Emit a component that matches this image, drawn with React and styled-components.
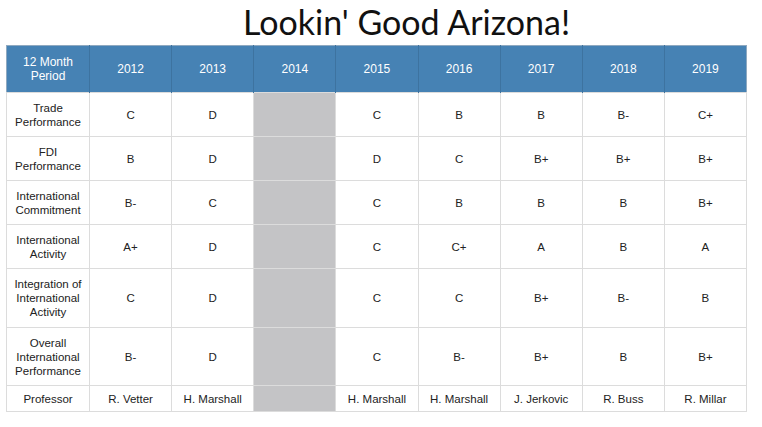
import styled, { createGlobalStyle } from 'styled-components';

const GlobalStyle = createGlobalStyle`
  body {
    margin: 0;
    background: #ffffff;
    font-family: "Liberation Sans", Arial, sans-serif;
  }
`;

const Page = styled.div`
  width: 762px;
  padding: 0 15px 0 6px;
  box-sizing: border-box;
`;

const Title = styled.h1`
  margin: 0;
  height: 45px;
  padding: 0 0 2px 60px;
  box-sizing: border-box;
  display: flex;
  align-items: center;
  justify-content: center;
  font-family: Lato, "Liberation Sans", sans-serif;
  font-weight: 400;
  font-size: 34px;
  color: #111111;
  line-height: 1;
`;

const Table = styled.table`
  width: 741px;
  border-collapse: collapse;
  table-layout: fixed;
  border: 1px solid #8fa9c0;
  font-family: "Liberation Sans", Arial, sans-serif;
  font-size: 11.5px;
  color: #222222;
`;

const HeadCell = styled.th`
  background: #4682b4;
  color: #ffffff;
  font-weight: 400;
  font-size: 12px;
  height: 46px;
  padding: 0 4px;
  line-height: 14px;
  border-left: 1px solid #3d73a0;
  text-align: center;
  &:first-child {
    border-left: none;
  }
`;

const Cell = styled.td`
  text-align: center;
  vertical-align: middle;
  padding: 0 4px;
  line-height: 14px;
  height: ${(p) => p.$h}px;
  border: 1px solid #dcdcdc;
  background: ${(p) => (p.$blank ? '#c4c4c6' : '#ffffff')};
`;

const years = ['2012', '2013', '2014', '2015', '2016', '2017', '2018', '2019'];

const rows = [
  { label: ['Trade', 'Performance'], h: 43, vals: ['C', 'D', '', 'C', 'B', 'B', 'B-', 'C+'] },
  { label: ['FDI', 'Performance'], h: 43, vals: ['B', 'D', '', 'D', 'C', 'B+', 'B+', 'B+'] },
  { label: ['International', 'Commitment'], h: 43, vals: ['B-', 'C', '', 'C', 'B', 'B', 'B', 'B+'] },
  { label: ['International', 'Activity'], h: 43, vals: ['A+', 'D', '', 'C', 'C+', 'A', 'B', 'A'] },
  {
    label: ['Integration of', 'International', 'Activity'],
    h: 58,
    vals: ['C', 'D', '', 'C', 'C', 'B+', 'B-', 'B'],
  },
  {
    label: ['Overall', 'International', 'Performance'],
    h: 57,
    vals: ['B-', 'D', '', 'C', 'B-', 'B+', 'B', 'B+'],
  },
  {
    label: ['Professor'],
    h: 25,
    vals: ['R. Vetter', 'H. Marshall', '', 'H. Marshall', 'H. Marshall', 'J. Jerkovic', 'R. Buss', 'R. Millar'],
  },
];

function App() {
  return (
    <Page>
      <GlobalStyle />
      <Title>Lookin' Good Arizona!</Title>
      <Table>
        <colgroup>
          <col style={{ width: 83 }} />
          {years.map((y) => (
            <col key={y} />
          ))}
        </colgroup>
        <thead>
          <tr>
            <HeadCell>
              12 Month
              <br />
              Period
            </HeadCell>
            {years.map((y) => (
              <HeadCell key={y}>{y}</HeadCell>
            ))}
          </tr>
        </thead>
        <tbody>
          {rows.map((r) => (
            <tr key={r.label.join(' ')}>
              <Cell $h={r.h}>
                {r.label.map((l, i) => (
                  <span key={l}>
                    {i > 0 && <br />}
                    {l}
                  </span>
                ))}
              </Cell>
              {r.vals.map((v, i) => (
                <Cell key={i} $h={r.h} $blank={i === 2}>
                  {v}
                </Cell>
              ))}
            </tr>
          ))}
        </tbody>
      </Table>
    </Page>
  );
}

export default App;
